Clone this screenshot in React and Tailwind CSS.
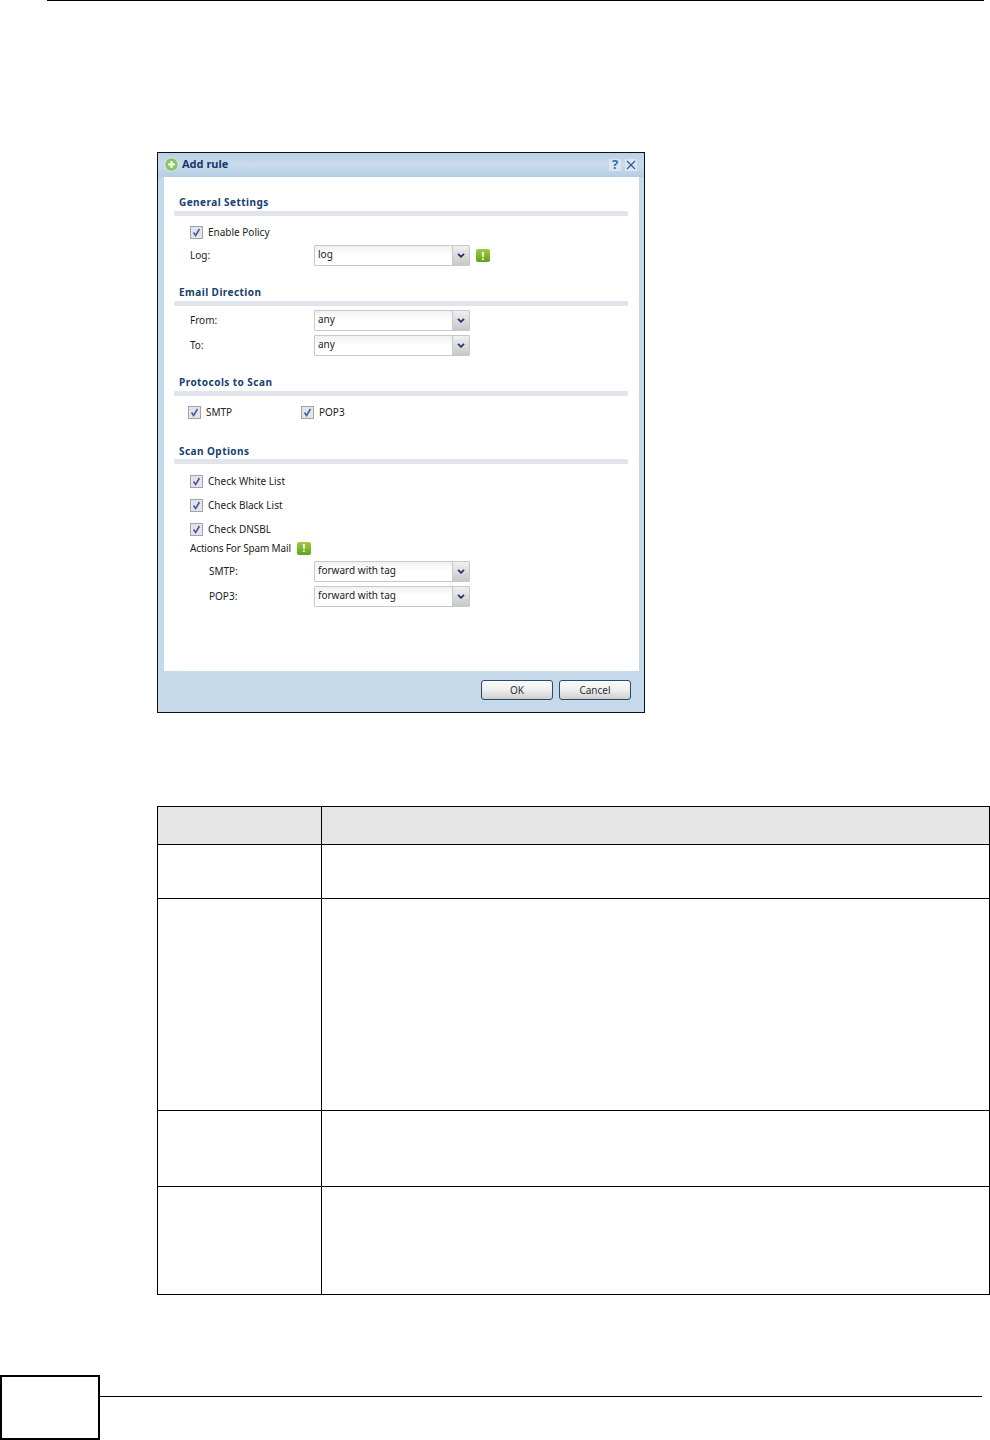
import React from "react";

const uiFont = { fontFamily: '"Noto Sans", "DejaVu Sans", sans-serif' };

const Check = ({ className = "" }) => (
  <span className={`flex items-center justify-center w-[13px] h-[13px] border border-[#a2a2aa] bg-[#e3e4ec] ${className}`}>
    <svg width="9" height="9" viewBox="0 0 9 9" fill="none">
      <path d="M1.5 4.5 L3.6 7.5 L7.5 1" stroke="#4a5a9e" strokeWidth="1.6" />
    </svg>
  </span>
);

const Alert = () => (
  <span className="flex items-center justify-center w-[14px] h-[13px] rounded-[2px] bg-gradient-to-b from-[#a0cc40] to-[#649f1e] text-white text-[10px] font-bold leading-none">
    !
  </span>
);

const Select = ({ value }) => (
  <div className="flex w-[156px] h-[21px] border border-[#c8c8c8] rounded-[1px] bg-gradient-to-b from-[#f1f1f1] via-white to-white">
    <span className="flex-1 pl-[3px] text-[10px] leading-[17px] text-[#222]">{value}</span>
    <span className="flex items-center justify-center w-[17px] border-l border-[#c8c8c8] bg-gradient-to-b from-[#f0f0f0] to-[#c8c8c8]">
      <svg width="8" height="5" viewBox="0 0 8 5" fill="none">
        <path d="M1 0.8 L4 3.8 L7 0.8" stroke="#1f3a68" strokeWidth="1.8" />
      </svg>
    </span>
  </div>
);

const SectionTitle = ({ children }) => (
  <div className="pl-[5px] text-[10px] leading-[14px] font-bold tracking-[0.45px] text-[#16406e]">{children}</div>
);

const Bar = () => <div className="h-[5px] w-[454px] bg-[#e2e4ec] rounded-[1px]" />;

const Field = ({ label, value, alert, labelClass = "w-[140px] pl-[16px]" }) => (
  <div className="flex items-center h-[21px]">
    <span className={`text-[10px] text-[#222] ${labelClass}`}>{label}</span>
    <Select value={value} />
    {alert && (
      <span className="ml-[6px]">
        <Alert />
      </span>
    )}
  </div>
);

const CheckRow = ({ label }) => (
  <div className="flex items-center h-[14px] pl-[16px] gap-[5px]">
    <Check />
    <span className="text-[10px] text-[#222]">{label}</span>
  </div>
);

const Button = ({ children }) => (
  <button className="w-[72px] h-[20px] border border-[#2b4a66] rounded-[3px] bg-gradient-to-b from-[#fbfbfb] via-[#eeeeee] to-[#cfcfcf] text-[10px] text-[#333] leading-none">
    {children}
  </button>
);

const rows = [54, 212, 76, 108];

export default function App() {
  return (
    <div className="relative w-[990px] h-[1440px] bg-white overflow-hidden">
      <div className="ml-[47px] w-[937px] h-px bg-black" />

      {/* Add rule dialog */}
      <div
        style={uiFont}
        className="mt-[151px] ml-[157px] w-[488px] h-[561px] flex flex-col border border-[#111] bg-[#c6d9ea]"
      >
        <div className="flex items-center h-[24px] pb-[1px] pl-[6px] pr-[6px] bg-gradient-to-b from-[#bcd0e6] via-[#c9dbec] to-[#b4cce2]">
          <svg width="15" height="15" viewBox="0 0 15 15">
            <circle cx="7.5" cy="7.5" r="6.7" fill="#84c668" stroke="#dfe9d2" />
            <path d="M7.5 4 V11 M4 7.5 H11" stroke="#fff" strokeWidth="2" />
          </svg>
          <span className="ml-[3px] text-[11px] font-bold text-[#15386e]">Add rule</span>
          <span className="ml-auto mr-[1px] flex gap-[4px]">
            <span className="flex items-center justify-center w-[12px] h-[12px] bg-[#dbe6f2] text-[#3b6ea8] text-[13px] font-bold leading-none">
              ?
            </span>
            <span className="flex items-center justify-center w-[12px] h-[12px] bg-[#dbe6f2]">
              <svg width="10" height="10" viewBox="0 0 10 10" fill="none">
                <path d="M1 1 L9 9 M9 1 L1 9" stroke="#2f5f9c" strokeWidth="1.3" />
              </svg>
            </span>
          </span>
        </div>

        <div className="flex-1 ml-[6px] mr-[5px] pt-[18px] pl-[10px] bg-white">
          <SectionTitle>General Settings</SectionTitle>
          <div className="mt-[2px]"><Bar /></div>
          <div className="mt-[9px]"><CheckRow label="Enable Policy" /></div>
          <div className="mt-[6px]"><Field label="Log:" value="log" alert /></div>

          <div className="mt-[19px]"><SectionTitle>Email Direction</SectionTitle></div>
          <div className="mt-[2px]"><Bar /></div>
          <div className="mt-[4px]"><Field label="From:" value="any" /></div>
          <div className="mt-[4px]"><Field label="To:" value="any" /></div>

          <div className="mt-[19px]"><SectionTitle>Protocols to Scan</SectionTitle></div>
          <div className="mt-[2px]"><Bar /></div>
          <div className="flex mt-[9px] pl-[14px] h-[14px]">
            <div className="flex items-center gap-[5px] w-[113px]">
              <Check />
              <span className="text-[10px] text-[#222]">SMTP</span>
            </div>
            <div className="flex items-center gap-[5px]">
              <Check />
              <span className="text-[10px] text-[#222]">POP3</span>
            </div>
          </div>

          <div className="mt-[25px]"><SectionTitle>Scan Options</SectionTitle></div>
          <div className="mt-[1px]"><Bar /></div>
          <div className="mt-[10px]"><CheckRow label="Check White List" /></div>
          <div className="mt-[10px]"><CheckRow label="Check Black List" /></div>
          <div className="mt-[10px]"><CheckRow label="Check DNSBL" /></div>
          <div className="flex items-center h-[14px] mt-[5px] pl-[16px] gap-[6px]">
            <span className="w-[101px] whitespace-nowrap text-[10px] tracking-[-0.15px] text-[#222]">Actions For Spam Mail</span>
            <Alert />
          </div>
          <div className="mt-[6px]"><Field label="SMTP:" value="forward with tag" labelClass="w-[140px] pl-[35px]" /></div>
          <div className="mt-[4px]"><Field label="POP3:" value="forward with tag" labelClass="w-[140px] pl-[35px]" /></div>
        </div>

        <div className="flex items-center justify-end gap-[6px] h-[41px] pb-[4px] pr-[13px]">
          <Button>OK</Button>
          <Button>Cancel</Button>
        </div>
      </div>

      {/* parameter table, text is blank in the source */}
      <table className="mt-[93px] ml-[157px] w-[833px] border-collapse table-fixed">
        <tbody>
          <tr className="h-[38px] bg-[#e5e5e5]">
            <td className="w-[164px] border border-black" />
            <td className="border border-black" />
          </tr>
          {rows.map((h) => (
            <tr key={h} style={{ height: h }}>
              <td className="border border-black" />
              <td className="border border-black" />
            </tr>
          ))}
        </tbody>
      </table>

      {/* page footer */}
      <div className="absolute left-0 bottom-0 flex items-start w-[982px]">
        <div className="w-[100px] h-[65px] border-2 border-black" />
        <div className="flex-1 mt-[21px] h-px bg-black" />
      </div>
    </div>
  );
}
